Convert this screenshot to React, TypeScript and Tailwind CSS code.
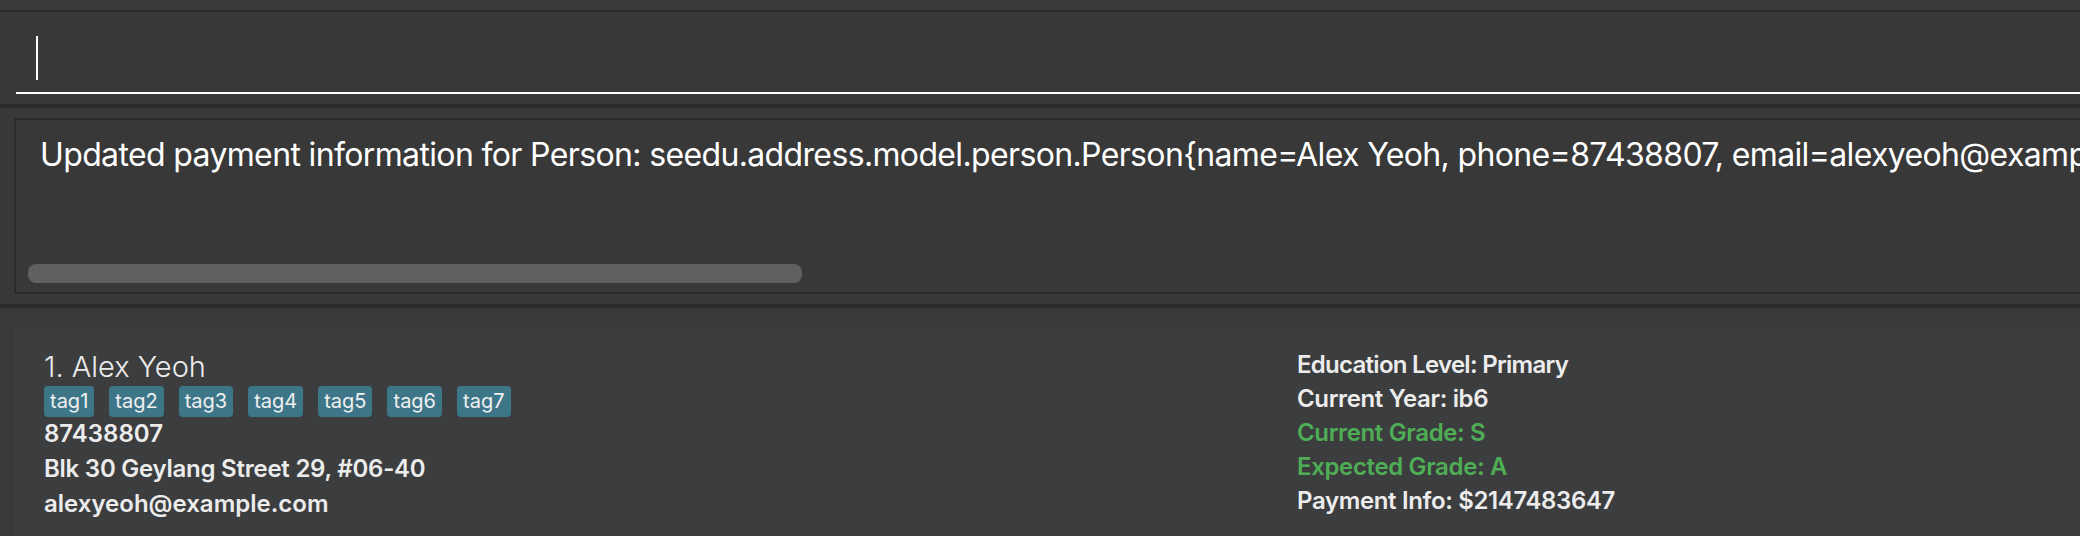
import React from 'react'

const tags = ['tag1', 'tag2', 'tag3', 'tag4', 'tag5', 'tag6', 'tag7']

export default function App() {
  return (
    <div
      className="w-[2080px] h-[536px] overflow-hidden bg-[#393939] flex flex-col"
      style={{ fontFamily: 'Inter, "Noto Sans", sans-serif' }}
    >
      {/* top strip */}
      <div className="h-[10px] shrink-0" />
      <div className="h-[2px] shrink-0 bg-[#2b2b2b]" />

      {/* command box */}
      <div className="h-[82px] shrink-0 bg-[#383838] pl-[16px] flex flex-col">
        <div className="h-[80px] pt-[24px] pl-[20px]">
          <div className="w-[2px] h-[44px] bg-white" />
        </div>
        <div className="h-[2px] bg-white" />
      </div>
      <div className="h-[10px] shrink-0 bg-[#383838]" />
      <div className="h-[4px] shrink-0 bg-[#2b2b2b]" />

      {/* result display */}
      <div className="h-[196px] shrink-0 bg-[#383838] pt-[10px] pl-[14px]">
        <div className="h-[176px] border-2 border-r-0 border-[#2b2b2b] flex flex-col overflow-hidden">
          <div className="pt-[15px] pl-[24px] text-[32px] leading-[40px] text-white whitespace-nowrap tracking-[-0.02em]">
            Updated payment information for Person: seedu.address.model.person.Person{'{'}name=Alex Yeoh,
            phone=87438807, email=alexyeoh@example.com, address=Blk 30 Geylang Street 29, #06-40
          </div>
          <div className="flex-1" />
          <div className="ml-[12px] mb-[9px] w-[774px] h-[19px] rounded-[8px] bg-[#606060]" />
        </div>
      </div>
      <div className="h-[4px] shrink-0 bg-[#2b2b2b]" />

      {/* person list */}
      <div className="flex-1 pt-[20px] pl-[14px]">
        <div className="h-full bg-[#3c3d3f] flex pl-[30px] pt-[20px] text-[#ececec]">
          <div className="w-[1253px] pt-[2px] flex flex-col">
            <div className="text-[29px] leading-[34px] font-light">1. Alex Yeoh</div>
            <div className="flex gap-[15px] mt-[2px]">
              {tags.map((t) => (
                <span
                  key={t}
                  className="h-[31px] px-[6px] rounded-[4px] bg-[#3e7689] text-[20px] leading-[31px] text-[#f0f0f0]"
                >
                  {t}
                </span>
              ))}
            </div>
            <div className="text-[24px] leading-[34px] font-semibold">87438807</div>
            <div className="text-[24px] leading-[35px] font-semibold tracking-[-0.01em]">
              Blk 30 Geylang Street 29, #06-40
            </div>
            <div className="text-[24px] leading-[35px] font-semibold">alexyeoh@example.com</div>
          </div>
          <div className="flex flex-col text-[24px] leading-[34px] font-semibold tracking-[-0.015em]">
            <div className="tracking-[-0.03em]">Education Level: Primary</div>
            <div>Current Year: ib6</div>
            <div className="text-[#4fae55]">Current Grade: S</div>
            <div className="text-[#4fae55]">Expected Grade: A</div>
            <div>Payment Info: $2147483647</div>
          </div>
        </div>
      </div>
    </div>
  )
}
